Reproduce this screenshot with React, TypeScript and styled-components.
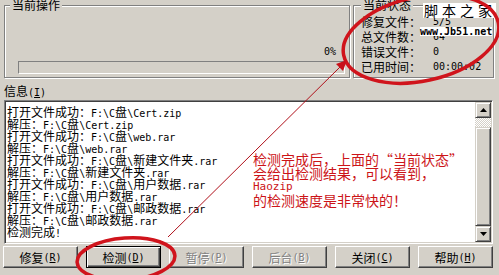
import React from "react";
import styled, { createGlobalStyle } from "styled-components";

const GlobalStyle = createGlobalStyle`
  html, body {
    margin: 0;
    padding: 0;
    background: #d4d0c8;
  }
  body {
    width: 499px;
    height: 275px;
    overflow: hidden;
    font-family: "Noto Sans CJK SC", "Noto Sans", sans-serif;
    font-size: 12px;
    color: #000;
  }
`;

const Window = styled.div`
    position: relative;
    width: 499px;
    height: 275px;
    box-sizing: border-box;
    padding: 0 5px 0 4px;
    display: flex;
    flex-direction: column;
    overflow: hidden;
`;

const Latin = styled.span`
    font-family: "DejaVu Sans Mono", "Liberation Mono", monospace;
    font-size: 10px;
`;

const TopRow = styled.div`
    display: flex;
    gap: 3px;
    height: 78px;
`;

const Group = styled.fieldset<{ $w: number; $pl: number }>`
    margin: 0;
    padding: 0 4px 0 ${p => p.$pl}px;
    width: ${p => p.$w}px;
    height: 78px;
    box-sizing: border-box;
    min-inline-size: 0;
    border: 1px solid #808080;
    box-shadow: inset 1px 1px 0 #fff, 1px 1px 0 #fff;

    legend {
        padding: 0 2px;
        line-height: 10px;
        font-size: 12px;
        background: #d4d0c8;
    }
`;

const OperationBody = styled.div`
    height: 64px;
    display: flex;
    flex-direction: column;
    justify-content: flex-end;
`;

const Percent = styled.div`
    text-align: right;
    padding-right: 9px;
    line-height: 12px;
    margin-bottom: 3px;
`;

const Progress = styled.div`
    margin-left: 8px;
    height: 13px;
    box-sizing: border-box;
    border: 1px solid;
    border-color: #808080 #fff #fff #808080;
`;

const StatusBody = styled.div`
    padding-top: 4px;
`;

const StatusRow = styled.div`
    display: grid;
    grid-template-columns: 72px auto;
    height: 15px;
    line-height: 15px;
    white-space: nowrap;
`;

const StatusValue = styled.span`
    font-family: "DejaVu Sans Mono", "Liberation Mono", monospace;
    font-size: 10px;
`;

const InfoLabel = styled.div`
    margin-top: 6px;
    height: 14px;
    line-height: 14px;

    u {
        text-decoration: underline;
    }
`;

const Log = styled.div`
    position: relative;
    margin: 2px 1px 0 0;
    height: 144px;
    box-sizing: border-box;
    border: 1px solid;
    border-color: #808080 #fff #fff #808080;
    box-shadow: inset 1px 1px 0 #404040, inset -1px -1px 0 #d4d0c8;
    display: flex;
    background: #fff;
`;

const LogText = styled.div`
    flex: 1;
    padding: 5px 0 0 2px;
`;

const LogLine = styled.div`
    height: 12px;
    line-height: 12px;
    white-space: pre;
`;

const ScrollBar = styled.div`
    width: 16px;
    margin: 1px 1px 1px 0;
    display: flex;
    flex-direction: column;
`;

const raised = `
    box-sizing: border-box;
    background: #d4d0c8;
    border: 1px solid;
    border-color: #d4d0c8 #404040 #404040 #d4d0c8;
    box-shadow: inset 1px 1px 0 #fff, inset -1px -1px 0 #808080;
`;

const ArrowButton = styled.div`
    ${raised};
    height: 16px;
    display: flex;
    align-items: center;
    justify-content: center;
`;

const Track = styled.div`
    height: 9px;
    background: repeating-conic-gradient(#fff 0 25%, #d4d0c8 0 50%) 0 0 / 2px 2px;
`;

const Thumb = styled.div`
    ${raised};
    flex: 1;
`;

const Note = styled.div`
    position: absolute;
    left: 248px;
    top: 51px;
    color: #cc1418;
    white-space: nowrap;
`;

const NoteLine = styled.div`
    font-size: 14px;
    line-height: 14px;
    height: 14px;
`;

const NoteMono = styled.div`
    font-family: "DejaVu Sans Mono", "Liberation Mono", monospace;
    font-size: 11px;
    line-height: 13px;
    height: 13px;
`;

const ButtonRow = styled.div`
    display: flex;
    gap: 8px;
    margin: 2px 0 0 -1px;
`;

const Button = styled.div<{ $default?: boolean; $disabled?: boolean }>`
    width: 75px;
    height: 22px;
    box-sizing: border-box;
    display: flex;
    align-items: center;
    justify-content: center;
    background: #d4d0c8;
    border: 1px solid;
    border-color: ${p => (p.$default ? "#000" : "#fff #404040 #404040 #fff")};
    box-shadow: ${p =>
        p.$default
            ? "inset 1px 1px 0 #fff, inset -1px -1px 0 #404040, inset -2px -2px 0 #808080"
            : "inset -1px -1px 0 #808080"};
    color: ${p => (p.$disabled ? "#808080" : "#000")};
    text-shadow: ${p => (p.$disabled ? "1px 1px 0 #fff" : "none")};
    white-space: nowrap;
`;

const Overlay = styled.svg`
    position: absolute;
    left: 0;
    top: 0;
    pointer-events: none;
`;

const Stamp = styled.span<{ $top: number; $left: number }>`
    position: absolute;
    top: ${p => p.$top}px;
    left: ${p => p.$left}px;
    background: #fff;
    color: #000;
    white-space: nowrap;
`;

const StampTitle = styled(Stamp)`
    font-size: 14px;
    line-height: 15px;
    letter-spacing: 4px;
    padding-left: 1px;
`;

const StampUrl = styled(Stamp)`
    font-family: "DejaVu Sans Mono", "Liberation Mono", monospace;
    font-size: 10px;
    line-height: 9px;
    font-weight: bold;
`;

const Mixed: React.FC<{ text: string }> = ({ text }) => (
    <>
        {text.split(/([\x20-\x7e]+)/).map((part, i) =>
            /^[\x20-\x7e]+$/.test(part) ? <Latin key={i}>{part}</Latin> : part
        )}
    </>
);

const logLines = [
    "打开文件成功：F:\\C盘\\Cert.zip",
    "解压：F:\\C盘\\Cert.zip",
    "打开文件成功：F:\\C盘\\web.rar",
    "解压：F:\\C盘\\web.rar",
    "打开文件成功：F:\\C盘\\新建文件夹.rar",
    "解压：F:\\C盘\\新建文件夹.rar",
    "打开文件成功：F:\\C盘\\用户数据.rar",
    "解压：F:\\C盘\\用户数据.rar",
    "打开文件成功：F:\\C盘\\邮政数据.rar",
    "解压：F:\\C盘\\邮政数据.rar",
    "检测完成!",
];

const status = [
    ["修复文件：", "5/5"],
    ["总文件数：", "64"],
    ["错误文件：", "0"],
    ["已用时间：", "00:00:02"],
];

const buttons = [
    { label: "修复", key: "R" },
    { label: "检测", key: "D", isDefault: true },
    { label: "暂停", key: "P", disabled: true },
    { label: "后台", key: "B", disabled: true },
    { label: "关闭", key: "C" },
    { label: "帮助", key: "H" },
];

const Arrow = ({ down }: { down?: boolean }) => (
    <svg width="7" height="4" viewBox="0 0 7 4">
        <polygon points={down ? "0,0 7,0 3.5,4" : "3.5,0 7,4 0,4"} fill="#000"/>
    </svg>
);

export default function App() {
    return (
        <>
            <GlobalStyle/>
            <Window lang="zh-CN">
                <TopRow>
                    <Group $w={346} $pl={5}>
                        <legend>当前操作</legend>
                        <OperationBody>
                            <Percent><Latin>0%</Latin></Percent>
                            <Progress/>
                        </OperationBody>
                    </Group>
                    <Group $w={141} $pl={7}>
                        <legend>当前状态</legend>
                        <StatusBody>
                            {status.map(([label, value]) => (
                                <StatusRow key={label}>
                                    <span>{label}</span>
                                    <StatusValue>{value}</StatusValue>
                                </StatusRow>
                            ))}
                        </StatusBody>
                    </Group>
                </TopRow>

                <InfoLabel>信息<Latin>(<u>I</u>)</Latin></InfoLabel>

                <Log>
                    <LogText>
                        {logLines.map((line, i) => (
                            <LogLine key={i}><Mixed text={line}/></LogLine>
                        ))}
                    </LogText>
                    <ScrollBar>
                        <ArrowButton><Arrow/></ArrowButton>
                        <Track/>
                        <Thumb/>
                        <ArrowButton><Arrow down/></ArrowButton>
                    </ScrollBar>
                    <Note>
                        <NoteLine>检测完成后，上面的“当前状态”</NoteLine>
                        <NoteLine>会给出检测结果，可以看到，</NoteLine>
                        <NoteMono>Haozip</NoteMono>
                        <NoteLine>的检测速度是非常快的！</NoteLine>
                    </Note>
                </Log>

                <ButtonRow>
                    {buttons.map(b => (
                        <Button key={b.key} $default={b.isDefault} $disabled={b.disabled}>
                            {b.label}<Latin>(<u>{b.key}</u>)</Latin>
                        </Button>
                    ))}
                </ButtonRow>

                <StampTitle $top={3} $left={423}>脚本之家</StampTitle>
                <StampUrl $top={27} $left={420}>www.Jb51.net</StampUrl>

                <Overlay width="499" height="275" viewBox="0 0 499 275">
                    <ellipse cx="421" cy="39" rx="79" ry="42" transform="rotate(-12 421 39)"
                             fill="none" stroke="#d0141c" strokeWidth="3.5"/>
                    <ellipse cx="126" cy="259" rx="49" ry="21" transform="rotate(-4 126 259)"
                             fill="none" stroke="#d0141c" strokeWidth="3.5"/>
                    <line x1="168" y1="237" x2="340" y2="67" stroke="#b0101a" strokeWidth="1"/>
                    <polygon points="347,60 343,71 336,64" fill="#c8101a"/>
                </Overlay>
            </Window>
        </>
    );
}
